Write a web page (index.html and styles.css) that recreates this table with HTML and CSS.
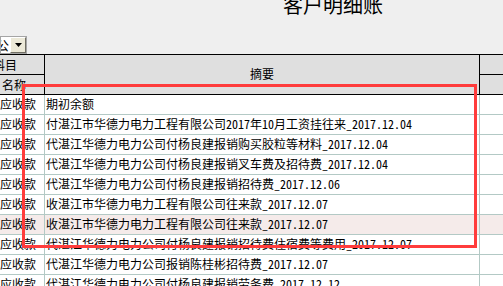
FILE: index.html
```html
<!DOCTYPE html>
<html lang="zh-CN">
<head>
<meta charset="utf-8">
<title>客户明细账</title>
<link rel="stylesheet" href="styles.css">
</head>
<body>
<div class="title-bar"><div class="title">客户明细账</div></div>
<div class="toolbar">
  <div class="combo">
    <div class="combo-val"><span>公</span></div>
    <div class="combo-btn"><svg width="7" height="4" viewBox="0 0 7 4"><polygon points="0,0 7,0 3.5,4" fill="#000"/></svg></div>
  </div>
</div>
<div class="sheet">
  <div class="head">
    <div class="c1 split">
      <div class="sub top"><span class="t-kemu">科目</span></div>
      <div class="sub"><span class="t-mingcheng">名称</span></div>
    </div>
    <div class="c2 center">摘要</div>
    <div class="c3 split">
      <div class="sub top"></div>
      <div class="sub"></div>
    </div>
  </div>
  <div class="row"><div class="c1">应收款</div><div class="c2">期初余额</div><div class="c3"></div></div>
  <div class="row"><div class="c1">应收款</div><div class="c2">付湛江市华德力电力工程有限公司2017年10月工资挂往来_2017.12.04</div><div class="c3"></div></div>
  <div class="row"><div class="c1">应收款</div><div class="c2">代湛江华德力电力公司付杨良建报销购买胶粒等材料_2017.12.04</div><div class="c3"></div></div>
  <div class="row"><div class="c1">应收款</div><div class="c2">代湛江华德力电力公司付杨良建报销叉车费及招待费_2017.12.04</div><div class="c3"></div></div>
  <div class="row"><div class="c1">应收款</div><div class="c2">代湛江华德力电力公司付杨良建报销招待费_2017.12.06</div><div class="c3"></div></div>
  <div class="row"><div class="c1">应收款</div><div class="c2">收湛江市华德力电力工程有限公司往来款_2017.12.07</div><div class="c3"></div></div>
  <div class="row hl"><div class="c1">应收款</div><div class="c2">收湛江市华德力电力工程有限公司往来款_2017.12.07</div><div class="c3"></div></div>
  <div class="row"><div class="c1">应收款</div><div class="c2">代湛江华德力电力公司付杨良建报销招待费住宿费等费用_2017.12.07</div><div class="c3"></div></div>
  <div class="row"><div class="c1">应收款</div><div class="c2">代湛江华德力电力公司报销陈桂彬招待费_2017.12.07</div><div class="c3"></div></div>
  <div class="row"><div class="c1">应收款</div><div class="c2">代湛江华德力电力公司付杨良建报销劳务费_2017.12.12</div><div class="c3"></div></div>
</div>
<div class="mark"></div>
</body>
</html>
```
FILE: styles.css
```css
html, body {
  margin: 0;
  padding: 0;
}
body {
  background: #efefef;
  font-family: "Noto Sans CJK SC", "Noto Sans", sans-serif;
  font-size: 12px;
  color: #000;
  width: 503px;
  height: 286px;
  overflow: hidden;
  position: relative;
  font-feature-settings: "hwid" 1;
}
.title-bar {
  height: 36px;
  padding-left: 283px;
  box-sizing: border-box;
  overflow: hidden;
}
.title {
  font-size: 20px;
  line-height: 20px;
  margin-top: -5px;
  white-space: nowrap;
}
.toolbar {
  height: 18px;
}
.combo {
  display: flex;
  width: 27px;
  height: 18px;
  box-sizing: border-box;
  border: 1px solid #a5a5a5;
  background: #fff;
}
.combo-val {
  width: 9px;
  overflow: hidden;
  line-height: 16px;
  font-size: 13px;
}
.combo-val span {
  display: block;
  margin-left: -5px;
  white-space: nowrap;
}
.combo-btn {
  width: 16px;
  box-sizing: border-box;
  background: #ece9d8;
  border: 1px solid;
  border-color: #fff #716f64 #716f64 #fff;
  display: flex;
  align-items: center;
  justify-content: center;
}
.sheet {
  width: 503px;
}
.head, .row {
  display: grid;
  grid-template-columns: 45px 435px 1fr;
}
.head {
  height: 41px;
  box-sizing: border-box;
  border-top: 1px solid #000;
  border-bottom: 1px solid #000;
  background: #dfdfdf;
}
.head .c1, .head .c2 {
  border-right: 1px solid #000;
}
.split {
  display: flex;
  flex-direction: column;
}
.sub {
  height: 19px;
  line-height: 19px;
  overflow: hidden;
  white-space: nowrap;
}
.sub.top {
  height: 20px;
  border-bottom: 1px solid #000;
  box-sizing: border-box;
}
.t-kemu {
  display: inline-block;
  margin-left: -7px;
}
.t-mingcheng {
  display: inline-block;
  margin-left: 2px;
}
.center {
  display: flex;
  align-items: center;
  justify-content: center;
  padding-bottom: 2px;
  box-sizing: border-box;
}
.row {
  height: 20px;
  box-sizing: border-box;
  border-bottom: 1px solid #b3c9c5;
  background: #fff;
  line-height: 17px;
}
.row.hl {
  background: #f5ebea;
}
.row .c1, .row .c2 {
  border-right: 1px solid #b3c9c5;
}
.row .c1, .row .c2, .row .c3 {
  white-space: nowrap;
  overflow: hidden;
}
.row .c2 {
  padding-left: 1px;
}
.mark {
  position: absolute;
  left: 22px;
  top: 84px;
  width: 455px;
  height: 164px;
  box-sizing: border-box;
  border: 3px solid #ff3c3c;
}
```
